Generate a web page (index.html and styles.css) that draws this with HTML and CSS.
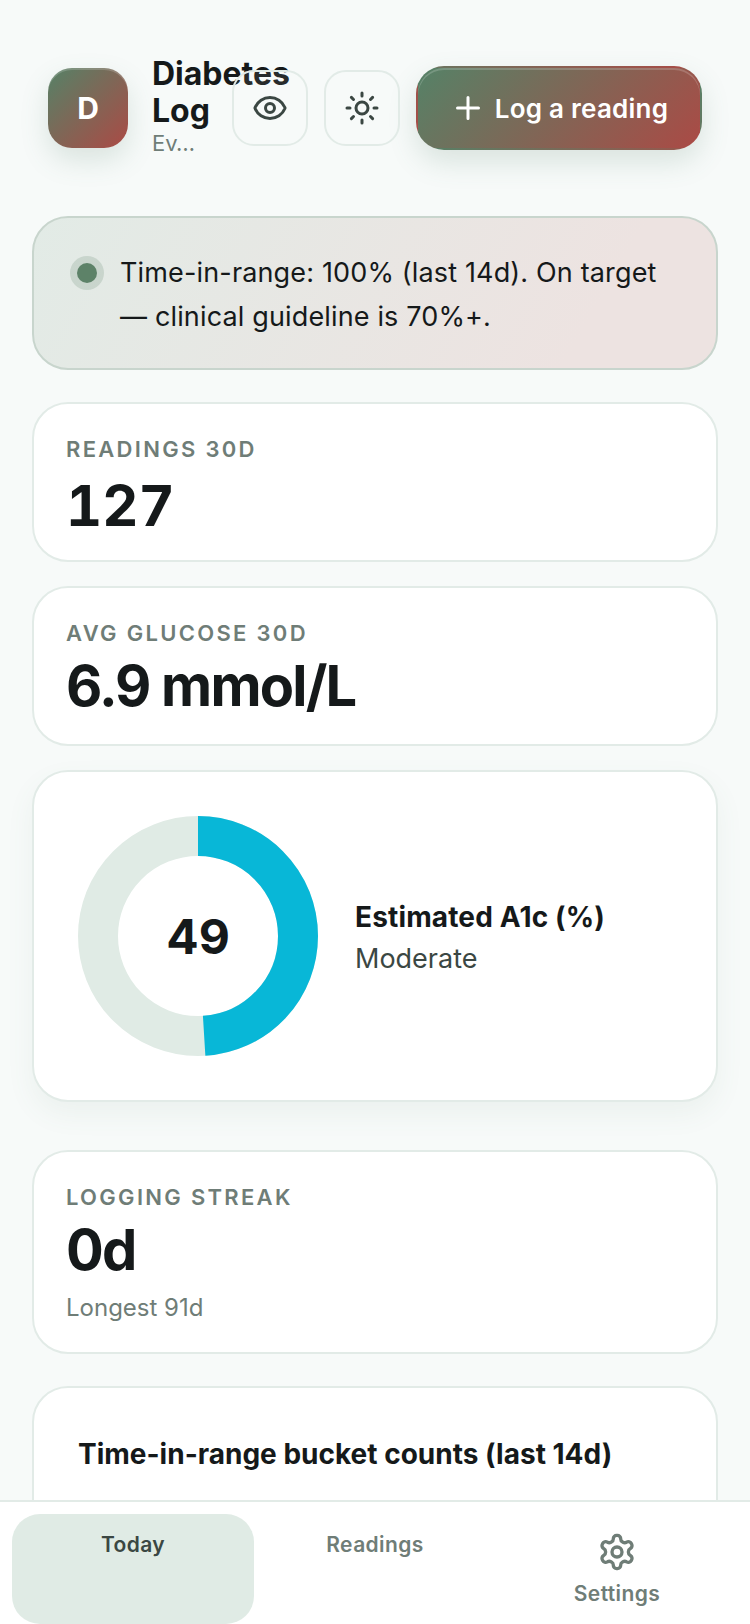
FILE: index.html
```html
<!DOCTYPE html>
<html lang="en">
<head>
<meta charset="utf-8">
<title>Diabetes Log</title>
<link rel="stylesheet" href="styles.css">
</head>
<body>
<div class="page">
  <header class="top">
    <div class="logo">D</div>
    <div class="brand">
      <div class="brand-title">Diabetes Log</div>
      <div class="brand-sub">Ev…</div>
    </div>
    <button class="icon-btn"><svg class="ico" viewBox="0 0 24 24"><path d="M2.06 12.35a1 1 0 0 1 0-.7 10.75 10.75 0 0 1 19.88 0 1 1 0 0 1 0 .7 10.75 10.75 0 0 1-19.88 0"/><circle cx="12" cy="12" r="3"/></svg></button>
    <button class="icon-btn"><svg class="ico" viewBox="0 0 24 24"><circle cx="12" cy="12" r="4"/><path d="M12 2v2M12 20v2M4.93 4.93l1.41 1.41M17.66 17.66l1.41 1.41M2 12h2M20 12h2M6.34 17.66l-1.41 1.41M19.07 4.93l-1.41 1.41"/></svg></button>
    <button class="cta"><svg class="ico" viewBox="0 0 24 24"><path d="M5 12h14M12 5v14"/></svg><span>Log a reading</span></button>
  </header>

  <main class="stack">
    <section class="alert">
      <span class="dot"></span>
      <p>Time-in-range: 100% (last 14d). On target<br>— clinical guideline is 70%+.</p>
    </section>

    <section class="card stat">
      <div class="label">READINGS 30D</div>
      <div class="value value-count">127</div>
    </section>

    <section class="card stat">
      <div class="label">AVG GLUCOSE 30D</div>
      <div class="value">6.9 mmol/L</div>
    </section>

    <section class="card donut-card">
      <div class="donut">
        <svg viewBox="0 0 240 240" width="240" height="240">
          <circle class="track" cx="120" cy="120" r="100"/>
          <circle class="arc" cx="120" cy="120" r="100" pathLength="100" stroke-dasharray="49 100" transform="rotate(-90 120 120)"/>
        </svg>
        <span class="donut-num">49</span>
      </div>
      <div class="donut-text">
        <div class="donut-title">Estimated A1c (%)</div>
        <div class="donut-sub">Moderate</div>
      </div>
    </section>

    <section class="card stat streak">
      <div class="label">LOGGING STREAK</div>
      <div class="value">0d</div>
      <div class="hint">Longest 91d</div>
    </section>

    <section class="card buckets">
      <h2>Time-in-range bucket counts (last 14d)</h2>
    </section>
  </main>
</div>

<nav class="tabs">
  <a class="tab active">Today</a>
  <a class="tab">Readings</a>
  <a class="tab"><svg class="gear" viewBox="0 0 24 24"><path d="M12.22 2h-.44a2 2 0 0 0-2 2v.18a2 2 0 0 1-1 1.73l-.43.25a2 2 0 0 1-2 0l-.15-.08a2 2 0 0 0-2.73.73l-.22.38a2 2 0 0 0 .73 2.73l.15.1a2 2 0 0 1 1 1.72v.51a2 2 0 0 1-1 1.74l-.15.09a2 2 0 0 0-.73 2.73l.22.38a2 2 0 0 0 2.73.73l.15-.08a2 2 0 0 1 2 0l.43.25a2 2 0 0 1 1 1.73V20a2 2 0 0 0 2 2h.44a2 2 0 0 0 2-2v-.18a2 2 0 0 1 1-1.73l.43-.25a2 2 0 0 1 2 0l.15.08a2 2 0 0 0 2.73-.73l.22-.39a2 2 0 0 0-.73-2.73l-.15-.08a2 2 0 0 1-1-1.74v-.5a2 2 0 0 1 1-1.74l.15-.09a2 2 0 0 0 .73-2.73l-.22-.38a2 2 0 0 0-2.73-.73l-.15.08a2 2 0 0 1-2 0l-.43-.25a2 2 0 0 1-1-1.73V4a2 2 0 0 0-2-2z"/><circle cx="12" cy="12" r="3"/></svg><span>Settings</span></a>
</nav>
</body>
</html>
```
FILE: styles.css
```css
* { box-sizing: border-box; }
html, body { margin: 0; height: 100%; overflow: hidden; }
body { background: #f7faf9; color: #15191a; font-family: Inter, "Liberation Sans", sans-serif; }
.page { padding: 50px 32px 0; }
.top { display: flex; align-items: center; gap: 16px; height: 116px; padding: 0 16px; margin-bottom: 50px; }
.logo { flex: none; width: 80px; height: 80px; border-radius: 24px; margin-right: 8px; display: flex; align-items: center; justify-content: center; color: #fff; font-size: 30px; font-weight: 700; background: linear-gradient(135deg, #558267, #ab4a45); box-shadow: inset 0 2px 0 rgba(255,255,255,.18), 0 12px 28px rgba(85,130,103,.18); }
.brand { flex: 1 1 0; min-width: 0; padding-bottom: 4px; }
.brand-title { font-size: 32px; font-weight: 700; line-height: 37px; }
.brand-sub { font-size: 22px; line-height: 28px; color: #6f7d77; white-space: nowrap; }
.icon-btn { flex: none; position: relative; width: 76px; height: 76px; border-radius: 22px; border: 2px solid #e2ebe7; background: rgba(255,255,255,.08); display: flex; align-items: center; justify-content: center; padding: 0; }
.ico { width: 36px; height: 36px; fill: none; stroke: #3b4743; stroke-width: 2; stroke-linecap: round; stroke-linejoin: round; }
.cta { flex: none; width: 286px; height: 84px; border: 2px solid transparent; border-radius: 28px; display: flex; align-items: center; justify-content: center; gap: 9px; padding: 0; color: #fff; font: 600 26px Inter, sans-serif; letter-spacing: .25px; background: linear-gradient(135deg, #558267, #ab4a45); box-shadow: inset 0 2px 0 rgba(255,255,255,.18), 0 12px 28px rgba(85,130,103,.18); }
.cta .ico { stroke: #fff; }
.stack { display: flex; flex-direction: column; gap: 24px; }
.alert { display: flex; gap: 16px; height: 154px; padding: 33px 36px; border: 2px solid #c8d5cd; border-radius: 36px; background: linear-gradient(120deg, #e2ebe6, #ede3e1 80%); margin-bottom: 8px; }
.alert p { margin: 0; font-size: 27px; line-height: 44px; color: #15191a; letter-spacing: .15px; white-space: nowrap; }
.dot { flex: none; width: 20px; height: 20px; margin: 12px 7px 0 7px; border-radius: 50%; background: #5d8268; box-shadow: 0 0 0 7px rgba(93,130,104,.2); }
.card { background: #fff; border: 2px solid #e2ebe7; border-radius: 36px; }
.stat { height: 160px; padding: 31px 32px; }
.label { font-size: 22px; font-weight: 600; letter-spacing: 2.3px; color: #6f7d77; line-height: 28px; }
.value { font-size: 56px; font-weight: 700; line-height: 68px; letter-spacing: -1.8px; margin-top: 5px; }
.value-count { font-variant-numeric: tabular-nums; letter-spacing: 0; margin-top: 9px; }
.donut-card { height: 332px; padding: 44px; display: flex; align-items: center; gap: 37px; box-shadow: 0 12px 28px rgba(85,130,103,.07); margin-bottom: 24px; }
.donut { position: relative; flex: none; width: 240px; height: 240px; }
.donut svg { display: block; }
.track, .arc { fill: none; stroke-width: 40; }
.track { stroke: #e0ebe5; }
.arc { stroke: #08b7d7; }
.donut-num { position: absolute; inset: 0; display: flex; align-items: center; justify-content: center; font-size: 48px; font-weight: 700; }
.donut-text { padding-top: 4px; }
.donut-title { font-size: 28px; font-weight: 700; line-height: 42px; letter-spacing: .15px; }
.donut-sub { font-size: 27px; line-height: 42px; color: #3b4743; }
.streak { height: 204px; margin-bottom: 8px; }
.hint { font-size: 24px; line-height: 32px; color: #6f7d77; margin-top: 8px; }
.buckets { height: 400px; padding: 44px; }
.buckets h2 { margin: 0; font-size: 28px; line-height: 44px; font-weight: 700; }
.tabs { position: fixed; left: 0; right: 0; bottom: 0; height: 124px; background: #fff; border-top: 2px solid #e2ebe7; display: grid; grid-template-columns: repeat(3, 1fr); padding: 12px 12px 0; }
.tab { display: flex; flex-direction: column; align-items: center; gap: 8px; padding-top: 17px; font-size: 21px; font-weight: 600; line-height: 28px; color: #6f7d77; border-radius: 28px; letter-spacing: .4px; }
.tab.active { background: #e0ebe5; color: #3b4743; }
.gear { width: 40px; height: 40px; margin-top: 1px; fill: none; stroke: #6f7d77; stroke-width: 2; stroke-linecap: round; stroke-linejoin: round; }
```
